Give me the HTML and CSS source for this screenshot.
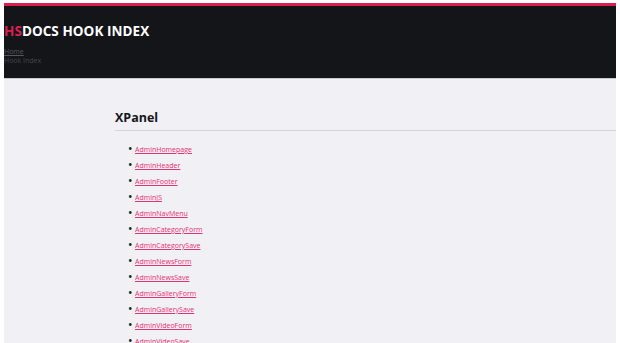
FILE: index.html
```html
<!DOCTYPE html>
<html lang="en">
<head>
  <meta charset="UTF-8" />
  <title>HSDocs Hook Index</title>
  <link rel="stylesheet" href="styles.css">
</head>
<body>

<header class="site-header">
  <h1 class="logo"><span class="logo-hs">HS</span>DOCS HOOK INDEX</h1>
  <nav class="crumbs">
    <a href="#">Home</a>
    <span>Hook Index</span>
  </nav>
</header>

<main class="content">
  <h2 class="section-title">XPanel</h2>
  <ul class="hook-list">
    <li><a href="#">AdminHomepage</a></li>
    <li><a href="#">AdminHeader</a></li>
    <li><a href="#">AdminFooter</a></li>
    <li><a href="#">AdminJS</a></li>
    <li><a href="#">AdminNavMenu</a></li>
    <li><a href="#">AdminCategoryForm</a></li>
    <li><a href="#">AdminCategorySave</a></li>
    <li><a href="#">AdminNewsForm</a></li>
    <li><a href="#">AdminNewsSave</a></li>
    <li><a href="#">AdminGalleryForm</a></li>
    <li><a href="#">AdminGallerySave</a></li>
    <li><a href="#">AdminVideoForm</a></li>
    <li><a href="#">AdminVideoSave</a></li>
  </ul>
</main>

</body>
</html>
```

FILE: styles.css
```css
body {
  margin: 3px 4px 0 4px;
  background: #ffffff;
  font-family: "Open Sans", sans-serif;
  overflow: hidden;
}

.site-header {
  background: #141519;
  border-top: 3px solid #dc1f4f;
  border-bottom: 1px solid #c9c9cf;
  height: 72px;
  display: flex;
  flex-direction: column;
}

.logo {
  margin: 15px 0 0 0;
  font-size: 13.5px;
  line-height: 20px;
  font-weight: 700;
  color: #ffffff;
  letter-spacing: 0.05px;
}

.logo-hs {
  color: #dc1f4f;
}

.crumbs {
  display: flex;
  flex-direction: column;
  margin-top: 6px;
  font-size: 7px;
  line-height: 9px;
  color: #45464c;
}

.crumbs a {
  color: #56575d;
}

.content {
  background: #f0f0f5;
  padding: 29px 0 0 111px;
  height: 400px;
}

.section-title {
  margin: 0;
  font-size: 12.5px;
  line-height: 20px;
  font-weight: 700;
  color: #16171b;
  padding-bottom: 2px;
  border-bottom: 1px solid #d4d4d9;
}

.hook-list {
  margin: 10px 0 0 0;
  padding-left: 13px;
  list-style: none;
  font-size: 9px;
  line-height: 16px;
  color: #16171b;
}

.hook-list li::before {
  content: "\2022";
  display: inline-block;
  width: 7px;
  font-size: 12px;
  line-height: 1;
  vertical-align: -1px;
}

.hook-list a {
  font-size: 7px;
  line-height: 1;
  color: #e52f74;
}
```
